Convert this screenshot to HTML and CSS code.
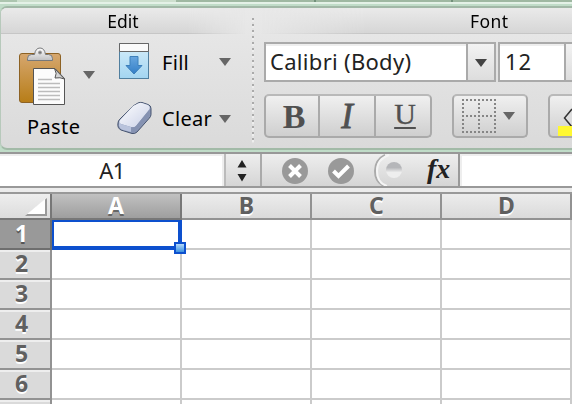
FILE: index.html
```html
<!DOCTYPE html>
<html lang="en"><head><meta charset="utf-8"><title>Spreadsheet</title><link rel="stylesheet" href="styles.css"></head>
<body>
<div class="tabs"><i class="tab-a"></i><i class="tab-b"></i><i class="tab-c"></i><i class="tab-d"></i></div>
<div class="ribbon-wrap"><div class="ribbon">
 <section class="edit">
  <h2>Edit</h2>
  <div class="edit-body">
   <div class="paste">
    <div class="paste-row">
    <svg width="52" height="64" viewBox="0 0 52 64">
     <defs><linearGradient id="board" x2="0" y2="1"><stop stop-color="#d6a76f"/><stop offset="1" stop-color="#b77d17"/></linearGradient><linearGradient id="metal" x2="0" y2="1"><stop stop-color="#fff"/><stop offset="1" stop-color="#bfc0c2"/></linearGradient></defs>
     <rect x="3.500" y="11.500" width="41" height="49" rx="2.500" fill="url(#board)" stroke="#8d6224"/>
     <path d="M11.500 18.500v-2q0-4 4-4h3q1-6.500 5.500-6.500t5.500 6.500h3q4 0 4 4v2z" fill="url(#metal)" stroke="#77797b"/><circle cx="24" cy="10.500" r="1.500" fill="#777" stroke="#999"/>
     <path d="M17.500 26.500H39l9.500 10V62.500h-31z" fill="#fcfcfc" stroke="#555"/><path d="M38.500 26.500q3 5 .5 9.500 5-1 9.500 1z" fill="#d5d5d5" stroke="#555"/>
     <path d="M22 37.500h14M22 41.500h22M22 45.500h22M22 49.500h22M22 53.500h22M22 57.500h22" stroke="#bcbcbc" stroke-width="1.500"/>
    </svg><i class="arrow"></i></div>
    <span class="label paste-label">Paste</span>
   </div>
   <div class="commands">
    <div class="command"><svg width="36" height="40" viewBox="0 0 36 40"><defs><linearGradient id="sky" x2="0" y2="1"><stop stop-color="#d6eefa"/><stop offset="1" stop-color="#a3d5f1"/></linearGradient><linearGradient id="blue" x2="0" y2="1"><stop stop-color="#67a6df"/><stop offset="1" stop-color="#347fc7"/></linearGradient></defs><rect x="3.500" y="1.500" width="29" height="35" fill="url(#sky)" stroke="#507f9f"/><path d="M3.500 9.500v-8h29v8z" fill="#fafafa" stroke="#666"/><path d="M14 14.500h8v9h4L18 32l-8-8.500h4z" fill="url(#blue)" stroke="#3d80bb"/></svg><span class="label fill-label">Fill</span><i class="arrow"></i></div>
    <div class="command clear"><svg width="36" height="40" viewBox="0 0 36 40"><defs><linearGradient id="rubber" x2="1" y2="1"><stop stop-color="#fff"/><stop offset="1" stop-color="#c9d0e7"/></linearGradient></defs><path d="M22 5q2-1 4-.5l6 2q3 1 3 4v6q0 2-2 4L21 34q-2 2-5 1.500L5 32q-4-2-3-7 0-2 2-4L17 8z" fill="#8995b3" stroke="#475571"/><path d="M22 5.500q2-1 4-.5l6 2q3 2 1 5L20 28q-2 2-5 1L5 26q-3-1-1-4L17 8z" fill="url(#rubber)"/><path d="M3 24v4q1 3 4 4l8 2v-5L5 26z" fill="#b9c3dc"/><path d="M15.500 29v5q2 1 4-1L33 18v-6L20 28q-2 2-4.500 1" fill="#8592b2"/></svg><span class="label clear-label">Clear</span><i class="arrow"></i></div>
   </div>
  </div>
 </section>
 <i class="separator"></i>
 <section class="font">
  <h2>Font</h2>
  <div class="fields"><div class="combo family"><span>Calibri (Body)</span><b><i class="arrow dark"></i></b></div><div class="combo size"><span>12</span><b></b></div></div>
  <div class="tools">
   <div class="biu"><span class="bold">B</span><span class="italic">I</span><span class="under">U</span></div>
   <div class="borders"><svg width="34" height="34"><g stroke="#858585" stroke-width="2" stroke-dasharray="2 2"><path d="M0 1h34M0 17h34M0 33h34M1 0v34M17 0v34M33 0v34" fill="none"/></g></svg><i class="arrow"></i></div>
   <div class="highlight"><svg width="22" height="42"><path d="M22 13 14.500 22 22 31" fill="#ddd" stroke="#333" stroke-width="1.500"/><path d="M8 30h14v10H8z" fill="#fff832"/></svg></div>
  </div>
 </section>
</div></div>
<div class="formula">
 <div class="namebox">A1</div>
 <div class="stepper"><svg width="10" height="22"><path d="M5 0l4.500 7.500h-9zM.5 14h9L5 21.500z" fill="#222"/></svg></div>
 <div class="actions"><svg width="198" height="32" viewBox="0 0 198 32"><defs><linearGradient id="knob" x2="0" y2="1"><stop offset=".35" stop-color="#b5b6b9"/><stop offset=".65" stop-color="#eee"/></linearGradient></defs><circle cx="33" cy="17" r="13" fill="#999"/><path d="M27.500 11.500l11 11m0-11l-11 11" stroke="#fff" stroke-width="4"/><circle cx="79" cy="17" r="13" fill="#999"/><path d="M71.500 17l5 5 10-10" fill="none" stroke="#fff" stroke-width="4"/><path d="M123 1q-10 5-10 16t9 15" fill="none" stroke="#aaa" stroke-width="2"/><path d="M127 1q-12 4-12 16t10 15" fill="none" stroke="#f5f5f5" stroke-width="2"/><circle cx="132" cy="16" r="8" fill="url(#knob)"/></svg><em>fx</em></div>
 <div class="formula-input"></div>
</div>
<div class="grid">
 <div class="corner"><svg width="22" height="18"><path d="M22 0v18H0" fill="#999"/><path d="M20 1v15H2z" fill="#fff"/></svg></div><div class="col active">A</div><div class="col">B</div><div class="col">C</div><div class="col">D</div>
 <div class="row active">1</div><div class="cell selected"><i></i></div><div class="cell"></div><div class="cell"></div><div class="cell"></div>
 <div class="row">2</div><div class="cell"></div><div class="cell"></div><div class="cell"></div><div class="cell"></div>
 <div class="row">3</div><div class="cell"></div><div class="cell"></div><div class="cell"></div><div class="cell"></div>
 <div class="row">4</div><div class="cell"></div><div class="cell"></div><div class="cell"></div><div class="cell"></div>
 <div class="row">5</div><div class="cell"></div><div class="cell"></div><div class="cell"></div><div class="cell"></div>
 <div class="row">6</div><div class="cell"></div><div class="cell"></div><div class="cell"></div><div class="cell"></div>
 <div class="row last"></div><div class="cell last"></div><div class="cell last"></div><div class="cell last"></div><div class="cell last"></div>
</div>
</body></html>
```
FILE: styles.css
```css
* { box-sizing: border-box; }
body { margin: 0; width: 572px; height: 404px; overflow: hidden; background: #fff; font-family: "Noto Sans", sans-serif; color: #000; }
.tabs { height: 2px; display: flex; background: #9fb8a2; }
.tab-a { width: 17px; background: #acc5af; }
.tab-b { width: 159px; background: #cddfce; }
.tab-c { width: 140px; border-right: 2px solid #71907a; }
.tab-d { width: 137px; border-right: 2px solid #71907a; }
.ribbon-wrap { height: 150px; background: #c0dcc8; border-top: 2px solid #e4f1e7; padding-top: 2px; }
.ribbon { height: 144px; display: flex; border-top: 2px solid #a2b8a7; border-bottom: 2px solid #a2baa7; border-left: 1px solid #b7c9bb; border-radius: 7px 0 0 7px; background: linear-gradient(#e9e9e9, #dadada); overflow: hidden; }
h2 { margin: 0; height: 26px; font-size: 17.500px; font-weight: 400; line-height: 27px; text-align: center; border-bottom: 1px solid #c6c6c6; background: linear-gradient(#eaeaea, #d6d6d6); }
.edit { width: 250px; }
.edit h2 { padding-right: 6px; -webkit-mask-image: linear-gradient(90deg, #000 75%, transparent 98%); }
.edit-body { display: flex; }
.paste { width: 112px; }
.paste-row { display: flex; align-items: center; padding: 8px 0 0 15px; }
.paste-row .arrow { margin: 2px 0 0 15px; }
.label { font-size: 20px; line-height: 24px; }
.paste-label { display: block; padding-left: 26px; margin-top: 9px; letter-spacing: .4px; }
.arrow { flex: none; width: 0; height: 0; border: 6px solid transparent; border-top: 8px solid #666; border-bottom: 0; }
.commands { padding: 8px 0 0 3px; }
.command { display: flex; align-items: center; width: 130px; height: 40px; }
.command .label { width: 57px; margin: 1px 0 0 10px; letter-spacing: .3px; }
.command svg { flex: none; }
.clear { margin-top: 16px; }
.clear .label { margin-top: 1px; }
.clear .arrow { margin-top: 1px; }
.separator { width: 2px; height: 125px; margin: 10px 0 0 1px; background: repeating-linear-gradient(#aaa 0 2px, #eee 2px 4px, #e3e3e3 4px 6px); }
.font { width: 318px; }
.font h2 { padding-left: 216px; text-align: left; letter-spacing: .4px; -webkit-mask-image: linear-gradient(90deg, transparent 2%, #000 35%); }
.fields { display: flex; gap: 2px; padding: 8px 0 0 10px; }
.combo { flex: none; height: 40px; border: 2px solid #aaa; background: #fff; display: flex; font-size: 22px; line-height: 35px; color: #222; box-shadow: inset 0 2px #eee; letter-spacing: .3px; }
.combo span { flex: 1; padding-left: 4px; white-space: pre; }
.combo b { width: 28px; border-left: 2px solid #aaa; background: linear-gradient(#f2f2f2, #ddd); display: flex; align-items: center; justify-content: center; }
.combo .dark { border-top-color: #444; margin-top: 2px; }
.family { width: 232px; }
.size { width: 96px; }
.size span { padding-left: 5px; letter-spacing: 1px; }
.tools { display: flex; padding: 12px 0 0 10px; }
.biu, .borders, .highlight { height: 44px; border: 2px solid #aaa; border-top-color: #b9b9b9; border-radius: 5px; background: linear-gradient(#f0f0f0, #cfcfcf); flex: none; }
.biu { width: 168px; display: flex; font: 35px/41px "Liberation Serif", serif; color: #505050; text-align: center; }
.biu span { width: 54px; border-right: 2px solid #aaa; }
.biu .italic { width: 56px; }
.biu .under { border: 0; }
.bold { font-weight: 700; font-size: 34px; padding-left: 4px; }
.italic { font-style: italic; -webkit-text-stroke: .8px #505050; }
.under { font-size: 30px; line-height: 35px; padding-left: 4px; text-decoration: underline; text-decoration-thickness: 2px; text-underline-offset: 3px; -webkit-text-stroke: .3px #505050; }
.borders { width: 76px; margin-left: 20px; display: flex; align-items: center; gap: 7px; padding-left: 8px; }
.highlight { width: 30px; margin-left: 20px; }
.formula { height: 36px; border-top: 2px solid #989898; border-bottom: 2px solid #999; display: flex; background: linear-gradient(#eee, #d5d5d5); }
.namebox { width: 224px; border-right: 2px solid #eee; border-top: 2px solid #eee; background: #fff; text-align: center; font-size: 22px; line-height: 28px; color: #222; letter-spacing: -.5px; padding-left: 2px; }
.stepper { width: 38px; border-left: 2px solid #bbb; border-right: 2px solid #aaa; padding: 6px 0 0 11px; }
.actions { width: 196px; display: flex; position: relative; }
.actions svg { flex: none; }
.actions em { position: absolute; left: 165px; top: -2px; font: italic bold 28px/34px "Liberation Serif", serif; color: #222; }
.formula-input { flex: 1; background: #fff; border-left: 2px solid #999; box-shadow: inset 2px 2px #eee; }
.grid { border-top: 2px solid #999; margin-top: 4px; display: grid; grid-template-columns: 52px repeat(4, 130px); grid-template-rows: 26px repeat(6, 30px) 4px; box-shadow: 0 -4px #ececec; }
.corner, .col, .row { border-right: 2px solid #929292; border-bottom: 2px solid #929292; }
.corner { background: linear-gradient(#eee, #dcdcdc); padding: 4px 0 0 25px; border-color: #777; }
.col, .row { text-align: center; font-weight: 700; font-size: 23px; color: #606060; text-shadow: 0 2px #fff; }
.col { background: linear-gradient(#ececec, #dadada); line-height: 22px; padding-left: 1px; }
.row { background: #dadada; box-shadow: inset 0 2px #eee; line-height: 26px; padding-right: 7px; }
.col.active { background: linear-gradient(#c1c1c1, #9e9e9e); color: #fff; text-shadow: 0 2px #666; border-color: #777; padding-left: 0; }
.row.active { background: #999; color: #fff; text-shadow: 0 2px #555; border-color: #6e6e6e; box-shadow: none; }
.cell { border-right: 2px solid #cbcbcb; border-bottom: 2px solid #cbcbcb; position: relative; }
.last { border-bottom: 0; }
.selected { border: 2px solid #0d50ce; border-bottom-width: 4px; border-right-width: 4px; width: 130px; }
.selected i { position: absolute; z-index: 2; right: -8px; bottom: -8px; width: 12px; height: 12px; border: 2px solid #0d50ce; background: linear-gradient(#b6dafa, #3c91df); }
```
